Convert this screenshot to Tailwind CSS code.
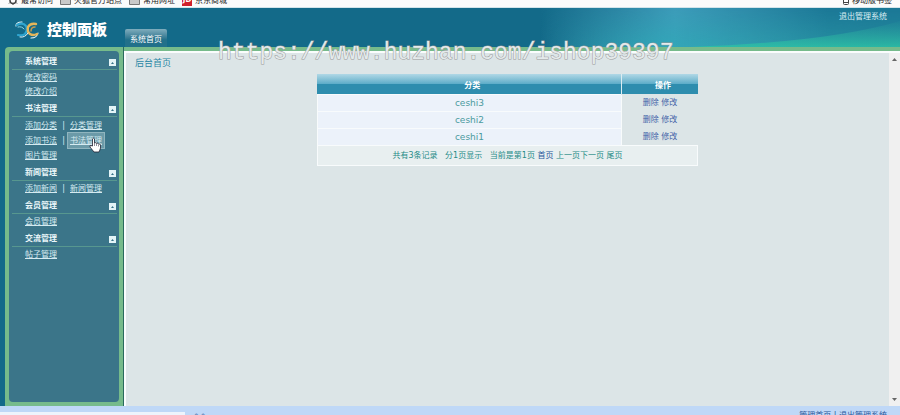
<!DOCTYPE html>
<html lang="zh-CN">
<head>
  <meta charset="utf-8">
  <meta name="viewport" content="width=device-width, initial-scale=1">
  <title>控制面板</title>
  <script src="https://cdn.jsdelivr.net/npm/@tailwindcss/browser@4"></script>
</head>
<body class="relative flex h-screen flex-col overflow-hidden bg-[#136a89] font-['DejaVu_Sans','Noto_Sans_CJK_SC',sans-serif] text-[8px] leading-[12px]">

  <!-- bookmarks -->
  <nav class="flex h-2 shrink-0 items-end justify-between overflow-hidden border-b border-[#d3e4ea] bg-[#fbfbfb] pr-2 pl-2 text-[#222]">
    <div class="flex items-end gap-[7px]">
      <a href="#" class="flex items-center gap-[3px]">
        <svg class="size-[10px]" viewBox="0 0 10 10" fill="none" stroke="#444"><circle cx="5" cy="4.500" r="3" stroke-width="1.500"/><path d="M5 0v2M5 7v2M1 2l1 1M8 6.500l1 1M9 2L8 3M1 7.500l1-1"/></svg>
        最常访问
      </a>
      <a href="#" class="flex items-center gap-[3px]">
        <svg class="h-[12px] w-[11px]" viewBox="0 0 11 12"><path d="M.5 1.500h10v8H.5z" fill="#c9c9c9" stroke="#777"/></svg>
        火狐官方站点
      </a>
      <a href="#" class="flex items-center gap-[3px]">
        <svg class="h-[12px] w-[11px]" viewBox="0 0 11 12"><path d="M.5 1.500h10v8H.5z" fill="#c9c9c9" stroke="#777"/></svg>
        常用网址
      </a>
      <a href="#" class="flex items-center gap-[3px]">
        <span class="h-[10px] w-[10px] bg-[#cf202c] text-center text-[7px] font-bold leading-[9px] text-white">JD</span>
        京东商城
      </a>
    </div>
    <a href="#" class="flex items-center gap-[3px]">
      <svg class="h-[12px] w-[6px]" viewBox="0 0 6 12"><rect x=".5" y=".5" width="5" height="9" rx="1" fill="#fff" stroke="#444"/><path d="M1 7.500h4" stroke="#444"/></svg>
      移动版书签
    </a>
  </nav>

  <header class="relative flex h-[39px] shrink-0 items-end bg-linear-to-r from-[#136a89] from-60% via-[#3d9cba] via-75% to-[#1b7897] to-92%">
    <svg class="absolute top-0 right-0 h-full w-2/5" viewBox="0 0 360 39" preserveAspectRatio="none">
      <defs>
        <linearGradient id="glow" x1="0" x2="1"><stop offset="0" stop-color="#2aa9ae" stop-opacity="0"/><stop offset=".35" stop-color="#30a9b8" stop-opacity=".8"/><stop offset="1" stop-color="#2c9aa0" stop-opacity=".5"/></linearGradient>
        <linearGradient id="wave" x1="0" y1="0" x2="0" y2="1"><stop offset="0" stop-color="#2ca99f" stop-opacity=".1"/><stop offset="1" stop-color="#2cc3a5"/></linearGradient>
        <linearGradient id="fade" x1="0" y1="0" x2="0" y2="1"><stop offset="0" stop-color="#fff" stop-opacity="0"/><stop offset="1" stop-color="#fff"/></linearGradient>
        <mask id="low"><rect width="360" height="39" fill="url(#fade)"/></mask>
      </defs>
      <rect width="360" height="39" fill="url(#glow)" mask="url(#low)"/>
      <path d="M150 39Q290 34 360 13V39z" fill="url(#wave)" opacity=".8"/>
    </svg>
    <div class="flex w-[125px] shrink-0 items-center gap-2 self-center pt-1 pl-[15px]">
      <svg class="h-[18px] w-6 shrink-0" viewBox="0 0 24 18" fill="none" stroke-linecap="round">
        <path d="M1 5Q1 1 7 1" stroke="#eefafc" stroke-width="1.200"/>
        <path d="M23 12Q22 17 16 17" stroke="#eefafc" stroke-width="1.200"/>
        <path d="M2 4Q8 1 11 5Q13 9 10 13Q8 15 3 14" stroke="#2fa5cf" stroke-width="2.200"/>
        <path d="M3 6Q7 5 9 8" stroke="#8bd6ea" stroke-width="1"/>
        <path d="M21 3Q15 2 13 6Q12 11 15 13Q18 15 22 13" stroke="#e5b65a" stroke-width="2.400"/>
        <path d="M20 6Q16 6 16 10" stroke="#c69a50" stroke-width="1.500"/>
        <path d="M5 16Q10 17 13 12" stroke="#dff1f5" stroke-width="1"/>
      </svg>
      <h1 class="text-[15px] leading-[20px] font-black whitespace-nowrap text-white">控制面板</h1>
    </div>
    <a href="#" class="flex h-[18px] w-[42px] items-center justify-center rounded-t-xs bg-linear-to-b from-[#7fadbd] to-[#22708a] to-60% pt-[3px] whitespace-nowrap text-white">系统首页</a>
    <a href="#" class="relative mr-[13px] mb-[24px] ml-auto text-[#d9eef3]">退出管理系统</a>
  </header>

  <main class="flex min-h-0 flex-1 pl-[5px]">
    <!-- sidebar -->
    <aside class="flex w-[119px] shrink-0 rounded-tl-sm border-r border-[#2b6a5e] bg-[#76bb8b] p-1">
      <nav class="flex-1 rounded-sm bg-[#3b7589] pt-px pr-0.5 pl-[3px] text-[#d5ebf1]">
        <section>
          <h2 class="flex items-center justify-between border-b border-[#57978f] pt-1 pr-px pb-px pl-[13px] font-bold text-[#eaf7fa]">系统管理
            <button type="button" aria-label="收起系统管理" class="grid size-[7px] place-items-center bg-[#e3f4f7]"><svg class="size-[5px]" viewBox="0 0 5 5"><path d="M1 4L2.500 2L4 4z" fill="#37738a"/></svg></button>
          </h2>
          <ul class="pt-px pl-[13px] leading-[14px]">
            <li><a href="#" class="underline">修改密码</a></li>
            <li><a href="#" class="underline">修改介绍</a></li>
          </ul>
        </section>
        <section>
          <h2 class="flex items-center justify-between border-b border-[#57978f] pt-1 pr-px pb-px pl-[13px] font-bold text-[#eaf7fa]">书法管理
            <button type="button" aria-label="收起书法管理" class="grid size-[7px] place-items-center bg-[#e3f4f7]"><svg class="size-[5px]" viewBox="0 0 5 5"><path d="M1 4L2.500 2L4 4z" fill="#37738a"/></svg></button>
          </h2>
          <ul class="pt-px pl-[13px] leading-[15px]">
            <li class="flex"><a href="#" class="underline">添加分类</a><span class="w-[13px] text-center">|</span><a href="#" class="underline">分类管理</a></li>
            <li class="flex"><a href="#" class="underline">添加书法</a><span class="w-[13px] text-center">|</span>
              <a href="#" class="relative -mx-0.5 bg-[#6b9aa8] px-0.5 underline outline outline-[#8fb5bf]">书法管理
                <svg class="absolute top-1 left-[21px] h-4 w-3" viewBox="0 0 12 16"><path d="M3.500 9V2Q4.500.5 5.500 2V6Q7 5 7.500 6.500Q9 5.500 9.500 7Q11 6.500 11.500 8V11Q11 13 10 15H5L1 10Q.5 8 2 8.500z" fill="#fff" stroke="#223" stroke-width=".8"/><path d="M5.500 6v3M7.500 7v2M9.500 7.500v2" stroke="#445" stroke-width=".6"/></svg>
              </a>
            </li>
            <li><a href="#" class="underline">图片管理</a></li>
          </ul>
        </section>
        <section>
          <h2 class="flex items-center justify-between border-b border-[#57978f] pt-1 pr-px pb-px pl-[13px] font-bold text-[#eaf7fa]">新闻管理
            <button type="button" aria-label="收起新闻管理" class="grid size-[7px] place-items-center bg-[#e3f4f7]"><svg class="size-[5px]" viewBox="0 0 5 5"><path d="M1 4L2.500 2L4 4z" fill="#37738a"/></svg></button>
          </h2>
          <ul class="pt-px pl-[13px] leading-[14px]">
            <li class="flex"><a href="#" class="underline">添加新闻</a><span class="w-[13px] text-center">|</span><a href="#" class="underline">新闻管理</a></li>
          </ul>
        </section>
        <section>
          <h2 class="flex items-center justify-between border-b border-[#57978f] pt-1 pr-px pb-px pl-[13px] font-bold text-[#eaf7fa]">会员管理
            <button type="button" aria-label="收起会员管理" class="grid size-[7px] place-items-center bg-[#e3f4f7]"><svg class="size-[5px]" viewBox="0 0 5 5"><path d="M1 4L2.500 2L4 4z" fill="#37738a"/></svg></button>
          </h2>
          <ul class="pt-px pl-[13px] leading-[14px]">
            <li><a href="#" class="underline">会员管理</a></li>
          </ul>
        </section>
        <section>
          <h2 class="flex items-center justify-between border-b border-[#57978f] pt-1 pr-px pb-px pl-[13px] font-bold text-[#eaf7fa]">交流管理
            <button type="button" aria-label="收起交流管理" class="grid size-[7px] place-items-center bg-[#e3f4f7]"><svg class="size-[5px]" viewBox="0 0 5 5"><path d="M1 4L2.500 2L4 4z" fill="#37738a"/></svg></button>
          </h2>
          <ul class="pt-px pl-[13px] leading-[14px]">
            <li><a href="#" class="underline">帖子管理</a></li>
          </ul>
        </section>
      </nav>
    </aside>

    <!-- content -->
    <div class="flex min-w-0 flex-1 border-t-4 border-[#76bb8b]">
      <div class="min-w-0 flex-1 border-t-2 border-l-2 border-[#fafdfd] bg-[#dce5e7] pt-1">
        <h2 class="pl-[9px] text-[9px] leading-[12px] text-[#2a87a5]">后台首页</h2>
        <table class="mx-auto mt-[5px] w-1/2 border-collapse text-center text-[#4b9a9e]">
          <thead>
            <tr class="h-5 bg-linear-to-b from-[#b0d8e6] via-[#5bacc8] via-50% to-[#2e8dae] to-50% text-white">
              <th class="w-4/5 border-r border-[#dcecf1] pt-1 pl-1.5">分类</th>
              <th class="w-1/5 pt-1 pl-1.5">操作</th>
            </tr>
          </thead>
          <tbody>
            <tr class="h-[17px]">
              <td class="border border-[#f8fbfc] bg-[#ecf2fa] text-[9px]">ceshi3</td>
              <td class="pt-px text-[#4563a8]"><a href="#">删除</a> <a href="#">修改</a></td>
            </tr>
            <tr class="h-[17px]">
              <td class="border border-[#f8fbfc] bg-[#ecf2fa] text-[9px]">ceshi2</td>
              <td class="pt-px text-[#4563a8]"><a href="#">删除</a> <a href="#">修改</a></td>
            </tr>
            <tr class="h-[17px]">
              <td class="border border-[#f8fbfc] bg-[#ecf2fa] text-[9px]">ceshi1</td>
              <td class="pt-px text-[#4563a8]"><a href="#">删除</a> <a href="#">修改</a></td>
            </tr>
          </tbody>
          <tfoot>
            <tr class="h-5">
              <td colspan="2" class="border border-[#f8fbfc] bg-[#e8eff0] pt-px text-[#258b87]">
                共有3条记录&nbsp;&nbsp; 分1页显示&nbsp;&nbsp; 当前是第1页 <a href="#" class="text-[#27579a]">首页</a> 上一页下一页 尾页
              </td>
            </tr>
          </tfoot>
        </table>
      </div>
      <div class="flex w-[11px] shrink-0 flex-col items-center justify-between border-t-2 border-[#fafdfd] bg-[#f0f0f0] py-1">
        <svg class="h-1 w-[5px]" viewBox="0 0 5 4"><path d="M0 4L2.500 1L5 4z" fill="#666"/></svg>
        <svg class="h-1 w-[5px]" viewBox="0 0 5 4"><path d="M0 0L2.500 3L5 0z" fill="#666"/></svg>
      </div>
    </div>
  </main>

  <footer class="flex h-[9px] shrink-0 items-start overflow-hidden bg-[#bfd8f7] pt-1.5">
    <div class="h-3 w-[185px] bg-[#edf4fc]"></div>
    <span class="ml-2 text-[#5b7fb5]">^^</span>
    <p class="mr-[13px] ml-auto leading-[8px] text-[#27579a]"><a href="#">管理首页</a> | <a href="#">退出管理系统</a></p>
  </footer>

  <p class="pointer-events-none absolute top-[39px] left-[218px] font-['Liberation_Mono',monospace] text-[23px] leading-[28px] text-[#e4eaeb] [-webkit-text-stroke:1px_#999] [paint-order:stroke]">https://www.huzhan.com/ishop39397</p>
</body>
</html>
